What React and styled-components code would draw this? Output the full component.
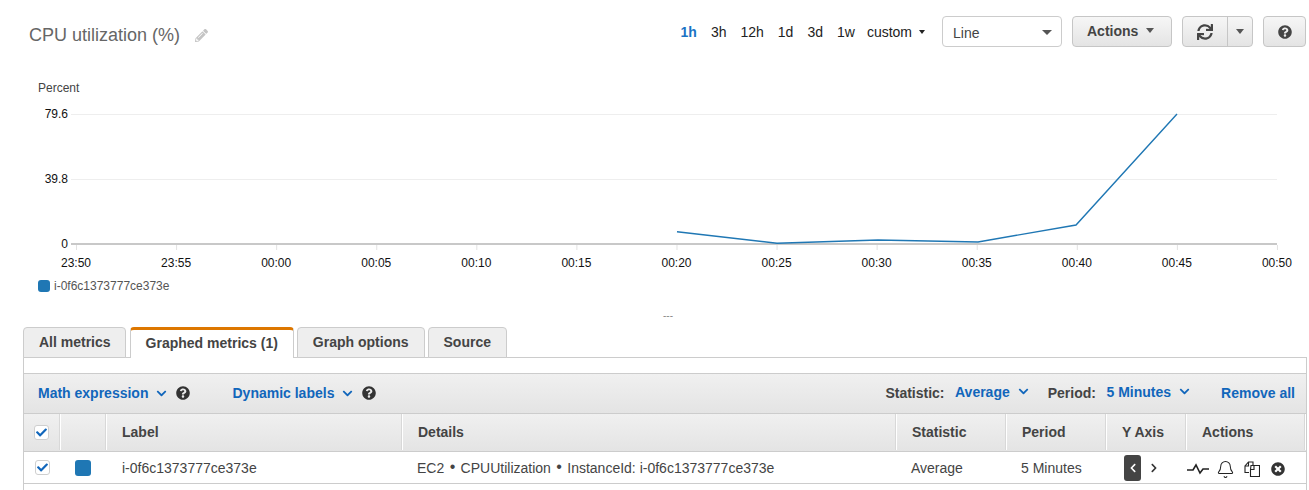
import styled, { createGlobalStyle } from "styled-components";
import { Bell } from "lucide-react";
import {
  FaCheck,
  FaChevronDown,
  FaChevronLeft,
  FaChevronRight,
  FaPencilAlt,
  FaQuestionCircle,
  FaSync,
  FaTimesCircle,
} from "react-icons/fa";

const BLUE = "#1166bb";
const TEXT = "#444444";
const LINE = "#cccccc";
const METRIC = "#1f77b4";

const ticks = ["23:50", "23:55", "00:00", "00:05", "00:10", "00:15", "00:20", "00:25", "00:30", "00:35", "00:40", "00:45", "00:50"];
const ranges = ["1h", "3h", "12h", "1d", "3d", "1w"];
const tabs = ["All metrics", "Graphed metrics (1)", "Graph options", "Source"];
const instanceId = "i-0f6c1373777ce373e";

const Chart = () => (
  <ChartSvg width="1309" height="200" viewBox="0 75 1309 200">
    <g fontFamily="'Liberation Sans', Arial, sans-serif" fontSize="12">
      <text x="38" y="92" fill="#444">Percent</text>
      <text x="68" y="118" textAnchor="end" fill="#111">79.6</text>
      <text x="68" y="183" textAnchor="end" fill="#111">39.8</text>
      <text x="68" y="248" textAnchor="end" fill="#111">0</text>
      {ticks.map((t, i) => (
        <text key={t} x={76 + i * 100.08} y="267" textAnchor="middle" fill="#111">
          {t}
        </text>
      ))}
    </g>
    <line x1="71" x2="1277" y1="114.5" y2="114.5" stroke="#eeeeee" />
    <line x1="71" x2="1277" y1="179.5" y2="179.5" stroke="#eeeeee" />
    <line x1="71" x2="1277" y1="244" y2="244" stroke="#c8c8c8" strokeWidth="2" />
    {ticks.map((t, i) => (
      <line key={t} x1={76.5 + i * 100.08} x2={76.5 + i * 100.08} y1="245" y2="250" stroke="#e2e2e2" />
    ))}
    <polyline
      points="677,231.7 777,243.2 878,240 978,242 1076,225 1177,114"
      fill="none"
      stroke={METRIC}
      strokeWidth="1.4"
    />
  </ChartSvg>
);

const CopyIcon = () => (
  <svg width="16" height="16" viewBox="0 0 16 16" fill="none" stroke="#222" strokeWidth="1.1">
    <path d="M5 11.5H1V5l3.5-4H9v3" />
    <path d="M1 5h3.5V1" />
    <path d="M7 4.5h8.5v11H6.5V8.5z" />
    <path d="M6.5 8.5H10V4.5" />
  </svg>
);

const PulseIcon = () => (
  <svg width="22" height="12" viewBox="0 0 22 12" fill="none" stroke="#222" strokeWidth="1.6">
    <path d="M0 7h6l3-5 4 8 3-4h6" />
  </svg>
);

const App = () => {
  return (
    <Page>
      <GlobalStyle />
      <Header>
        <Title>CPU utilization (%)</Title>
        <Pencil />
        <Ranges>
          {ranges.map((r) => (
            <Range key={r} $active={r === "1h"}>
              {r}
            </Range>
          ))}
          <Custom>
            custom <SmallCaret />
          </Custom>
        </Ranges>
        <Select>
          Line
          <Caret />
        </Select>
        <ActionsButton>
          Actions
          <Caret $small />
        </ActionsButton>
        <SplitButton>
          <SplitMain>
            <FaSync size={16} />
          </SplitMain>
          <SplitSide>
            <Caret $small />
          </SplitSide>
        </SplitButton>
        <HelpButton>
          <FaQuestionCircle size={14} />
        </HelpButton>
      </Header>

      <Chart />

      <Legend>
        <LegendSwatch />
        {instanceId}
      </Legend>
      <Dashes>---</Dashes>

      <Tabs>
        {tabs.map((t) => (
          <Tab key={t} $active={t === "Graphed metrics (1)"}>
            {t}
          </Tab>
        ))}
      </Tabs>

      <Panel>
        <Toolbar>
          <ToolbarLink>
            Math expression <Chevron />
          </ToolbarLink>
          <Help />
          <ToolbarLink $gap>
            Dynamic labels <Chevron />
          </ToolbarLink>
          <Help />
          <Spacer />
          <ToolbarLabel>Statistic:</ToolbarLabel>
          <ToolbarLink $raised>
            Average <Chevron />
          </ToolbarLink>
          <ToolbarLabel>Period:</ToolbarLabel>
          <ToolbarLink $raised>
            5 Minutes <Chevron />
          </ToolbarLink>
          <RemoveAll>Remove all</RemoveAll>
        </Toolbar>

        <HeaderRow>
          <HeadCell>
            <CheckBox>
              <FaCheck size={11} />
            </CheckBox>
          </HeadCell>
          <HeadCell />
          <HeadCell $pad={15}>Label</HeadCell>
          <HeadCell $pad={15}>Details</HeadCell>
          <HeadCell $pad={15}>Statistic</HeadCell>
          <HeadCell $pad={15}>Period</HeadCell>
          <HeadCell $pad={15}>Y Axis</HeadCell>
          <HeadCell $pad={15}>Actions</HeadCell>
        </HeaderRow>

        <BodyRow>
          <BodyCell $pad={11}>
            <CheckBox>
              <FaCheck size={11} />
            </CheckBox>
          </BodyCell>
          <BodyCell $pad={14}>
            <Swatch />
          </BodyCell>
          <BodyCell $pad={15}>{instanceId}</BodyCell>
          <BodyCell $pad={14}>
            EC2 <Dot>•</Dot> CPUUtilization <Dot>•</Dot> InstanceId: {instanceId}
          </BodyCell>
          <BodyCell $pad={14}>Average</BodyCell>
          <BodyCell $pad={14}>5 Minutes</BodyCell>
          <BodyCell $pad={17}>
            <AxisLeft>
              <FaChevronLeft size={10} />
            </AxisLeft>
            <AxisRight>
              <FaChevronRight size={10} />
            </AxisRight>
          </BodyCell>
          <ActionIcons>
            <PulseIcon />
            <BellIcon size={19} color="#222" strokeWidth={1.3} />
            <CopyIcon />
            <RemoveIcon size={14} color="#333" />
          </ActionIcons>
        </BodyRow>
      </Panel>
    </Page>
  );
};

export default App;

//Styled Components

const GlobalStyle = createGlobalStyle`
  html, body {
    margin: 0;
    background: #ffffff;
    overflow: hidden;
  }

  * {
    box-sizing: border-box;
  }
`;

const Page = styled.div`
  width: 1309px;
  height: 490px;
  overflow: hidden;
  font-family: "Liberation Sans", Arial, sans-serif;
  font-size: 14px;
  color: ${TEXT};
`;

const Header = styled.div`
  height: 75px;
  padding: 16px 3px 0 29px;
  display: flex;
  align-items: flex-start;
`;

const Title = styled.div`
  font-size: 18px;
  line-height: 38px;
  color: #666666;
`;

const Pencil = styled(FaPencilAlt)`
  width: 13px;
  height: 13px;
  margin: 13px 0 0 15px;
  color: #c4c4c4;
`;

const Ranges = styled.div`
  margin-left: auto;
  margin-right: 17px;
  height: 31px;
  display: flex;
  align-items: center;
  gap: 14px;
  color: #222222;
`;

const Range = styled.span`
  color: ${(p) => (p.$active ? "#1a73c4" : "#222222")};
  font-weight: ${(p) => (p.$active ? 700 : 400)};
`;

const Custom = styled.span`
  margin-left: -2px;
  display: flex;
  align-items: center;
  gap: 7px;
`;

const SmallCaret = styled.i`
  width: 0;
  height: 0;
  border: 3px solid transparent;
  border-top: 4px solid #222222;
  border-bottom: 0;
`;

const Caret = styled.i`
  width: 0;
  height: 0;
  border: ${(p) => (p.$small ? "4.5px" : "5px")} solid transparent;
  border-top: 5px solid #555555;
  border-bottom: 0;
`;

const Select = styled.div`
  width: 120px;
  height: 31px;
  padding: 2px 9px 0 10px;
  display: flex;
  align-items: center;
  justify-content: space-between;
  border: 1px solid ${LINE};
  border-radius: 4px;
  color: #444444;
`;

const grayButton = `
  height: 31px;
  background: linear-gradient(#f6f6f6, #e4e4e4);
  border: 1px solid #c6c6c6;
  border-radius: 4px;
  display: flex;
  align-items: center;
  color: #444444;
`;

const ActionsButton = styled.div`
  ${grayButton}
  width: 100px;
  margin-left: 10px;
  padding: 0 0 2px 14px;
  gap: 8px;
  font-weight: 700;
`;

const SplitButton = styled.div`
  ${grayButton}
  width: 71px;
  margin-left: 10px;
`;

const SplitMain = styled.div`
  width: 45px;
  height: 100%;
  padding-right: 1px;
  display: flex;
  align-items: center;
  justify-content: center;
  border-right: 1px solid #c6c6c6;
`;

const SplitSide = styled.div`
  flex: 1;
  display: flex;
  justify-content: center;
`;

const HelpButton = styled.div`
  ${grayButton}
  width: 43px;
  margin-left: 10px;
  justify-content: center;
`;

const ChartSvg = styled.svg`
  display: block;
`;

const Legend = styled.div`
  height: 20px;
  padding: 1px 0 0 38px;
  display: flex;
  align-items: center;
  gap: 4px;
  font-size: 12px;
  color: #555555;
`;

const LegendSwatch = styled.i`
  width: 12px;
  height: 12px;
  border-radius: 3px;
  background: ${METRIC};
`;

const Dashes = styled.div`
  height: 32px;
  padding: 15px 0 0 27px;
  text-align: center;
  font-size: 10px;
  line-height: 12px;
  color: #888888;
`;

const Tabs = styled.div`
  height: 31px;
  padding-left: 23px;
  display: flex;
  align-items: flex-end;
  gap: 3px;
`;

const Tab = styled.div`
  height: 31px;
  padding: 0 15px 2px;
  display: flex;
  align-items: center;
  font-weight: 700;
  color: #444444;
  background: ${(p) => (p.$active ? "#ffffff" : "#eeeeee")};
  border: 1px solid ${LINE};
  border-top: ${(p) => (p.$active ? "3px solid #dd7700" : `1px solid ${LINE}`)};
  border-bottom: ${(p) => (p.$active ? "0" : `1px solid ${LINE}`)};
  border-radius: 4px 4px 0 0;
  position: relative;
  z-index: 1;

  &:first-child {
    padding-right: 14px;
    margin-right: 1px;
  }
`;

const Panel = styled.div`
  margin: -1px 2px 0 23px;
  height: 134px;
  padding-top: 15px;
  border: 1px solid ${LINE};
  border-bottom: 0;
`;

const Toolbar = styled.div`
  height: 41px;
  padding: 0 11px 1px 14px;
  display: flex;
  align-items: center;
  background: linear-gradient(#f0f0f0, #e4e4e4);
  border-top: 1px solid ${LINE};
  border-bottom: 1px solid ${LINE};
`;

const ToolbarLink = styled.span`
  margin-left: ${(p) => (p.$gap ? "42px" : "0")};
  margin-top: ${(p) => (p.$raised ? "-3px" : "0")};
  display: flex;
  align-items: center;
  gap: 8px;
  font-weight: 700;
  color: ${BLUE};
`;

const Chevron = styled(FaChevronDown)`
  width: 11px;
  height: 11px;
`;

const Help = styled(FaQuestionCircle)`
  width: 14px;
  height: 14px;
  margin-left: 9px;
  color: #333333;
`;

const Spacer = styled.div`
  flex: 1;
`;

const ToolbarLabel = styled.span`
  font-weight: 700;
  margin: 0 10.5px 0 19px;
  color: #444444;
`;

const RemoveAll = styled.span`
  margin-left: 31px;
  font-weight: 700;
  color: ${BLUE};
`;

const columns = "37px 46px 296px 494px 110px 100px 80px 1fr";

const HeaderRow = styled.div`
  height: 38px;
  padding-bottom: 1px;
  display: grid;
  grid-template-columns: ${columns};
  background: linear-gradient(#f0f0f0, #e4e4e4);
  border-bottom: 1px solid ${LINE};
`;

const HeadCell = styled.div`
  display: flex;
  align-items: center;
  padding-left: ${(p) => (p.$pad ? `${p.$pad}px` : "10px")};
  font-weight: 700;
  color: #444444;
  border-right: 1px solid #ffffff;
  box-shadow: inset -1px 0 0 #d8d8d8;
`;

const BodyRow = styled.div`
  height: 32px;
  display: grid;
  grid-template-columns: ${columns};
  border-bottom: 1px solid ${LINE};
`;

const BodyCell = styled.div`
  display: flex;
  align-items: center;
  white-space: pre;
  padding-left: ${(p) => p.$pad}px;
  color: #444444;
`;

const CheckBox = styled.span`
  width: 15px;
  height: 15px;
  display: flex;
  align-items: center;
  justify-content: center;
  background: #ffffff;
  border: 1px solid #cfcfcf;
  border-radius: 3px;
  color: ${BLUE};
`;

const Swatch = styled.i`
  width: 16px;
  height: 16px;
  border-radius: 3px;
  background: ${METRIC};
`;

const Dot = styled.span`
  font-size: 16px;
  margin: 0 1.5px;
  position: relative;
  top: -1px;
`;

const AxisLeft = styled.span`
  width: 17px;
  height: 26px;
  display: flex;
  align-items: center;
  justify-content: center;
  background: #444444;
  border-radius: 3px;
  color: #ffffff;
`;

const AxisRight = styled.span`
  margin-left: 8px;
  display: flex;
  color: #333333;
`;

const ActionIcons = styled.div`
  padding-top: 3px;
  display: flex;
  align-items: center;
  gap: 10px;
`;

const BellIcon = styled(Bell)`
  margin: 0 -1px 0 -3px;
`;

const RemoveIcon = styled(FaTimesCircle)`
  margin-left: 1px;
`;
